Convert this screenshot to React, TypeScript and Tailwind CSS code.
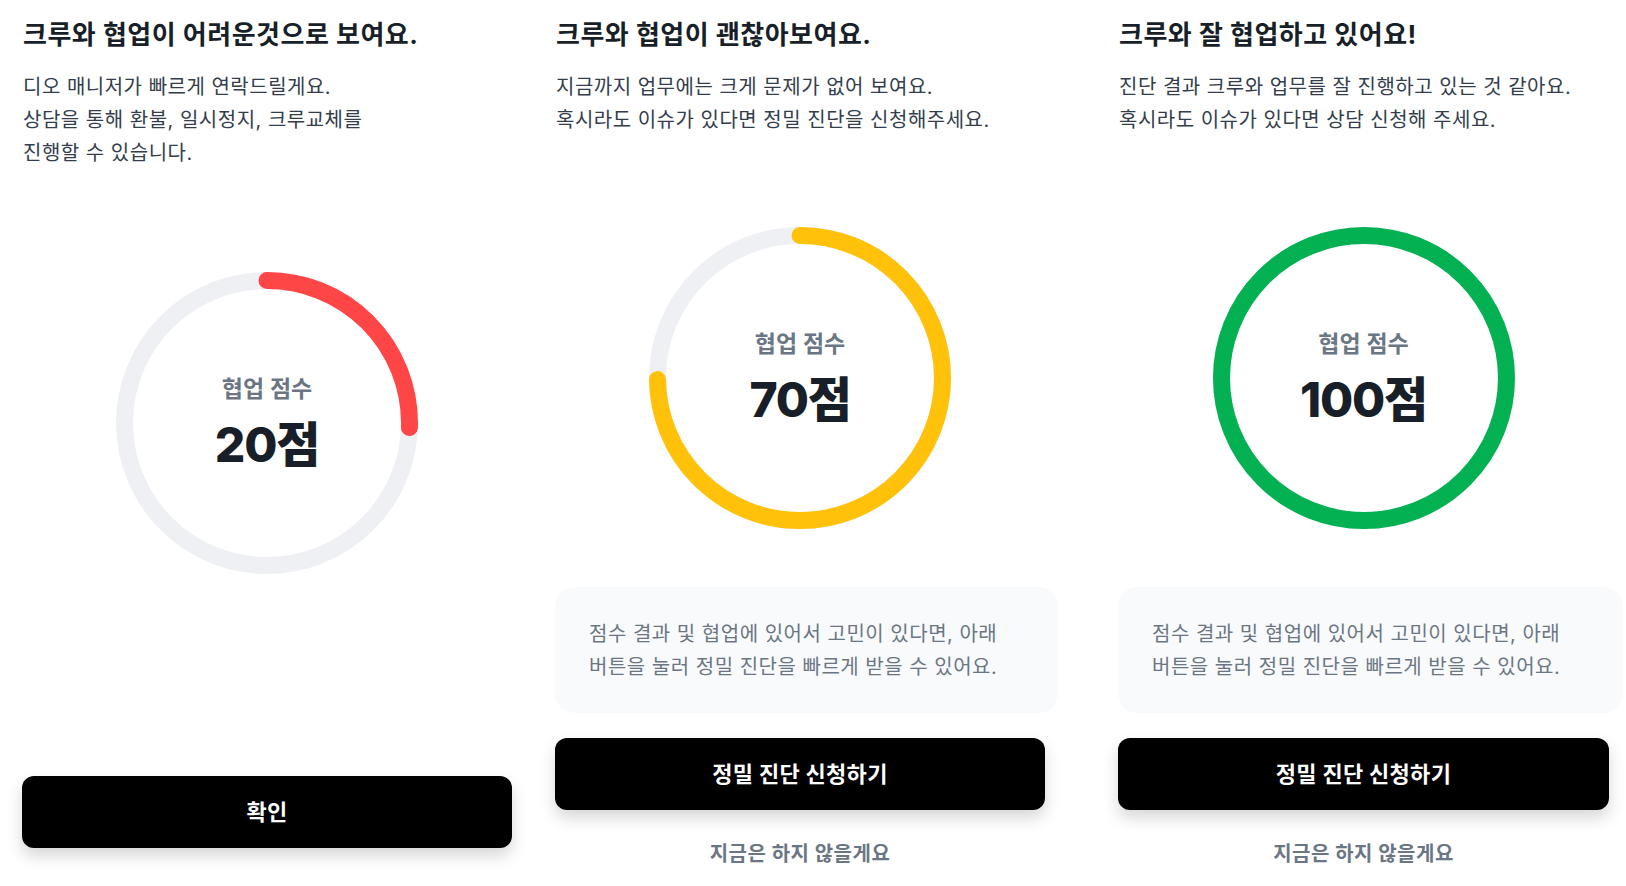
import React from 'react'

const FONT = "font-['Inter','Noto_Sans_CJK_KR',sans-serif]"

// progress ring, starts at 12 o'clock and runs clockwise
function ScoreRing({ percent, color, score }: { percent: number; color: string; score: number }) {
  const r = 142.5
  const c = 2 * Math.PI * r
  return (
    <div className="relative mx-auto h-[302px] w-[302px]">
      <svg width="302" height="302" viewBox="0 0 302 302" className="-rotate-90">
        <circle cx="151" cy="151" r={r} fill="none" stroke="#EEF0F3" strokeWidth="17" />
        <circle
          cx="151"
          cy="151"
          r={r}
          fill="none"
          stroke={color}
          strokeWidth="17"
          strokeLinecap="round"
          strokeDasharray={`${c * percent} ${c}`}
        />
      </svg>
      <div className="absolute inset-0 flex flex-col items-center justify-center">
        <span className="text-[23px] font-semibold leading-[30px] text-[#6B7684]">협업 점수</span>
        <span className="mt-[13px] text-[48px] font-extrabold leading-[56px] tracking-tight text-[#191F28]">
          {score}점
        </span>
      </div>
    </div>
  )
}

function Title({ children }: { children: React.ReactNode }) {
  return (
    <h2 className="pl-[1px] pt-[18px] text-[26px] font-bold leading-[34px] tracking-[0.5px] text-[#191F28]">
      {children}
    </h2>
  )
}

function Body({ lines }: { lines: string[] }) {
  return (
    <p className="mt-[19px] pl-[1px] text-[20px] leading-[33px] tracking-[0.5px] text-[#333D4B]">
      {lines.map((l, i) => (
        <React.Fragment key={i}>
          {l}
          {i < lines.length - 1 && <br />}
        </React.Fragment>
      ))}
    </p>
  )
}

function DarkButton({ label }: { label: string }) {
  return (
    <button className="flex h-[72px] w-full items-center justify-center rounded-[12px] bg-black text-[22px] font-bold tracking-[0.3px] text-white shadow-[0_8px_16px_rgba(0,0,0,0.16)]">
      {label}
    </button>
  )
}

function DiagnosisFooter({ boxWidth }: { boxWidth: string }) {
  return (
    <>
      <div className={`mt-[58px] h-[126px] rounded-[20px] bg-[#F9FAFB] pl-[34px] pt-[31px] ${boxWidth}`}>
        <p className="text-[20px] leading-[33px] tracking-[0.5px] text-[#6B7684]">
          점수 결과 및 협업에 있어서 고민이 있다면, 아래
          <br />
          버튼을 눌러 정밀 진단을 빠르게 받을 수 있어요.
        </p>
      </div>
      <div className="mt-[25px]">
        <DarkButton label="정밀 진단 신청하기" />
      </div>
      <p className="mt-[30px] text-center text-[20px] font-bold leading-[28px] tracking-[0.5px] text-[#6B7684]">
        지금은 하지 않을게요
      </p>
    </>
  )
}

export default function App() {
  return (
    <div className={`flex h-[886px] w-[1626px] overflow-hidden bg-white pl-[22px] ${FONT}`}>
      {/* low score */}
      <section className="flex w-[490px] shrink-0 flex-col">
        <Title>크루와 협업이 어려운것으로 보여요.</Title>
        <Body lines={['디오 매니저가 빠르게 연락드릴게요.', '상담을 통해 환불, 일시정지, 크루교체를', '진행할 수 있습니다.']} />
        <div className="mt-[102px]">
          <ScoreRing percent={0.255} color="#FF4646" score={20} />
        </div>
        <div className="mt-[202px]">
          <DarkButton label="확인" />
        </div>
      </section>

      {/* middle score */}
      <section className="ml-[43px] flex w-[490px] shrink-0 flex-col">
        <Title>크루와 협업이 괜찮아보여요.</Title>
        <Body lines={['지금까지 업무에는 크게 문제가 없어 보여요.', '혹시라도 이슈가 있다면 정밀 진단을 신청해주세요.']} />
        <div className="mt-[90px]">
          <ScoreRing percent={0.748} color="#FFC10A" score={70} />
        </div>
        <DiagnosisFooter boxWidth="w-[503px]" />
      </section>

      {/* high score */}
      <section className="ml-[73px] flex w-[491px] shrink-0 flex-col">
        <Title>크루와 잘 협업하고 있어요!</Title>
        <Body lines={['진단 결과 크루와 업무를 잘 진행하고 있는 것 같아요.', '혹시라도 이슈가 있다면 상담 신청해 주세요.']} />
        <div className="mt-[90px]">
          <ScoreRing percent={1} color="#03B152" score={100} />
        </div>
        <DiagnosisFooter boxWidth="w-[505px]" />
      </section>
    </div>
  )
}
